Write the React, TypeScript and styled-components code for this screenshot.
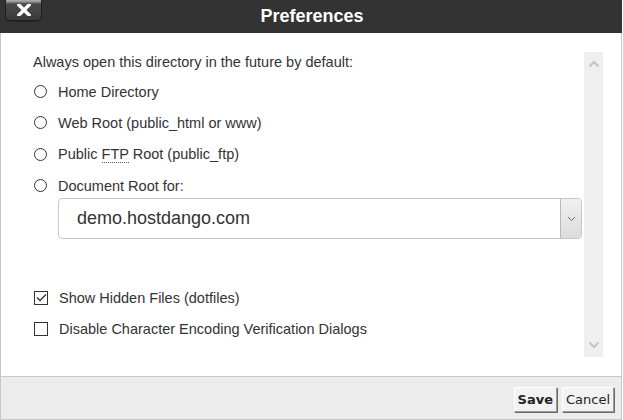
import React from 'react';
import styled, { createGlobalStyle } from 'styled-components';

const GlobalStyle = createGlobalStyle`
  html, body {
    margin: 0;
    padding: 0;
    background: #ffffff;
  }
  body {
    font-family: Arial, "Liberation Sans", sans-serif;
  }
`;

const radios = [
  { id: 'home', label: 'Home Directory' },
  { id: 'web', label: 'Web Root (public_html or www)' },
  { id: 'ftp', label: 'Public FTP Root (public_ftp)' },
  { id: 'doc', label: 'Document Root for:' },
];

function RadioLabel({ label }: { label: string }) {
  if (!label.includes('FTP')) return <>{label}</>;
  const [before, after] = label.split('FTP');
  return (
    <>
      {before}
      <Abbr title="File Transfer Protocol">FTP</Abbr>
      {after}
    </>
  );
}

export default function App() {
  return (
    <>
      <GlobalStyle />
      <Dialog>
        <Header>
          <CloseButton aria-label="close">
            <svg width="14" height="12" viewBox="0 0 14 12">
              <path d="M2 1 L12 11 M12 1 L2 11" stroke="#fff" strokeWidth="3.4" strokeLinecap="square" />
            </svg>
          </CloseButton>
          <Title>Preferences</Title>
        </Header>

        <Body>
          <Content>
            <Intro>Always open this directory in the future by default:</Intro>
            {radios.map((r) => (
              <Row key={r.id}>
                <Radio />
                <RowText>
                  <RadioLabel label={r.label} />
                </RowText>
              </Row>
            ))}
            <Select>
              <SelectText>demo.hostdango.com</SelectText>
              <SelectArrow>
                <svg width="9" height="6" viewBox="0 0 9 6">
                  <path d="M1 1 L4.5 4.5 L8 1" fill="none" stroke="#666" strokeWidth="1" />
                </svg>
              </SelectArrow>
            </Select>

            <Checks>
              <Row>
                <Checkbox>
                  <svg width="11" height="9" viewBox="0 0 11 9">
                    <path d="M1 4.5 L4 7.5 L10 1.5" fill="none" stroke="#333" strokeWidth="1.3" />
                  </svg>
                </Checkbox>
                <RowText>Show Hidden Files (dotfiles)</RowText>
              </Row>
              <Row>
                <Checkbox />
                <RowText>Disable Character Encoding Verification Dialogs</RowText>
              </Row>
            </Checks>
          </Content>

          <ScrollTrack>
            <svg width="12" height="8" viewBox="0 0 12 8">
              <path d="M1.5 6.5 L6 2 L10.5 6.5" fill="none" stroke="#c4c4c4" strokeWidth="2" />
            </svg>
            <svg width="12" height="8" viewBox="0 0 12 8">
              <path d="M1.5 1.5 L6 6 L10.5 1.5" fill="none" stroke="#c4c4c4" strokeWidth="2" />
            </svg>
          </ScrollTrack>
        </Body>

        <Footer>
          <Button bold>Save</Button>
          <Button>Cancel</Button>
        </Footer>
      </Dialog>
    </>
  );
}

const Dialog = styled.div`
  width: 622px;
  height: 420px;
  display: flex;
  flex-direction: column;
  box-sizing: border-box;
  border-left: 1px solid #c8c8c8;
  border-right: 1px solid #c8c8c8;
  border-bottom: 1px solid #c8c8c8;
  background: #fff;
`;

const Header = styled.div`
  position: relative;
  height: 33px;
  margin: 0 -1px;
  background: #333333;
  display: flex;
  align-items: center;
  justify-content: center;
  flex-shrink: 0;
`;

const CloseButton = styled.button`
  position: absolute;
  left: 5px;
  top: 0;
  width: 37px;
  height: 21px;
  padding: 0;
  border: 1px solid #1e1e1e;
  border-top: none;
  border-radius: 0 0 5px 5px;
  background: linear-gradient(to bottom, #b5b5b5 0px, #8a8a8a 2px, #4a4a4a 4px, #3a3a3a 100%);
  display: flex;
  align-items: center;
  justify-content: center;
  box-shadow: 0 1px 0 #262626;
`;

const Title = styled.h1`
  margin: 0 0 0 2px;
  font-family: Arial, "Liberation Sans", sans-serif;
  font-size: 18px;
  font-weight: bold;
  color: #ffffff;
`;

const Body = styled.div`
  flex: 1;
  display: flex;
  min-height: 0;
`;

const Content = styled.div`
  flex: 1;
  padding: 20px 0 0 32px;
  color: #333;
  font-size: 14.5px;
`;

const Intro = styled.p`
  margin: 0 0 5px;
  line-height: 18px;
`;

const Row = styled.label`
  display: flex;
  align-items: center;
  height: 31.3px;
  gap: 11px;
  margin-left: 1px;
`;

const RowText = styled.span`
  font-size: 14.5px;
  color: #333;
  line-height: 18px;
`;

const Abbr = styled.abbr`
  text-decoration: none;
  border-bottom: 1px dotted #555;
`;

const Radio = styled.span`
  width: 11px;
  height: 11px;
  border: 1px solid #333;
  border-radius: 50%;
  background: #fff;
  flex-shrink: 0;
`;

const Checkbox = styled.span`
  width: 12px;
  height: 12px;
  border: 1px solid #333;
  background: #fff;
  flex-shrink: 0;
  display: flex;
  align-items: center;
  justify-content: center;
`;

const Select = styled.div`
  margin: -3px 0 0 25px;
  width: 524px;
  height: 41px;
  box-sizing: border-box;
  border: 1px solid #c8c8c8;
  border-radius: 4px;
  display: flex;
  align-items: stretch;
  overflow: hidden;
`;

const SelectText = styled.span`
  flex: 1;
  display: flex;
  align-items: center;
  padding-left: 18px;
  font-size: 18px;
  color: #333;
`;

const SelectArrow = styled.span`
  width: 20px;
  border-left: 1px solid #b9b9b9;
  background: linear-gradient(to bottom, #f0f0f0, #dcdcdc);
  display: flex;
  align-items: center;
  justify-content: center;
`;

const Checks = styled.div`
  margin-top: 43px;
`;

const ScrollTrack = styled.div`
  width: 19px;
  margin: 19px 18px 19px 0;
  background: #efefef;
  display: flex;
  flex-direction: column;
  justify-content: space-between;
  align-items: center;
  padding: 8px 0;
  box-sizing: border-box;
`;

const Footer = styled.div`
  height: 43px;
  flex-shrink: 0;
  background: #ececec;
  border-top: 1px solid #c8c8c8;
  display: flex;
  justify-content: flex-end;
  align-items: center;
  gap: 5px;
  padding-right: 7px;
  box-sizing: border-box;
`;

const Button = styled.button<{ bold?: boolean }>`
  height: 25px;
  padding: 0 3px;
  font-family: Verdana, "DejaVu Sans", sans-serif;
  font-size: 13px;
  font-weight: ${(p) => (p.bold ? 'bold' : 'normal')};
  color: #222;
  background: #f2f2f2;
  border: 1px solid;
  border-color: #ffffff #9a9a9a #9a9a9a #ffffff;
  box-shadow: 1px 1px 0 #6a6a6a;
  margin-top: 2px;
`;
